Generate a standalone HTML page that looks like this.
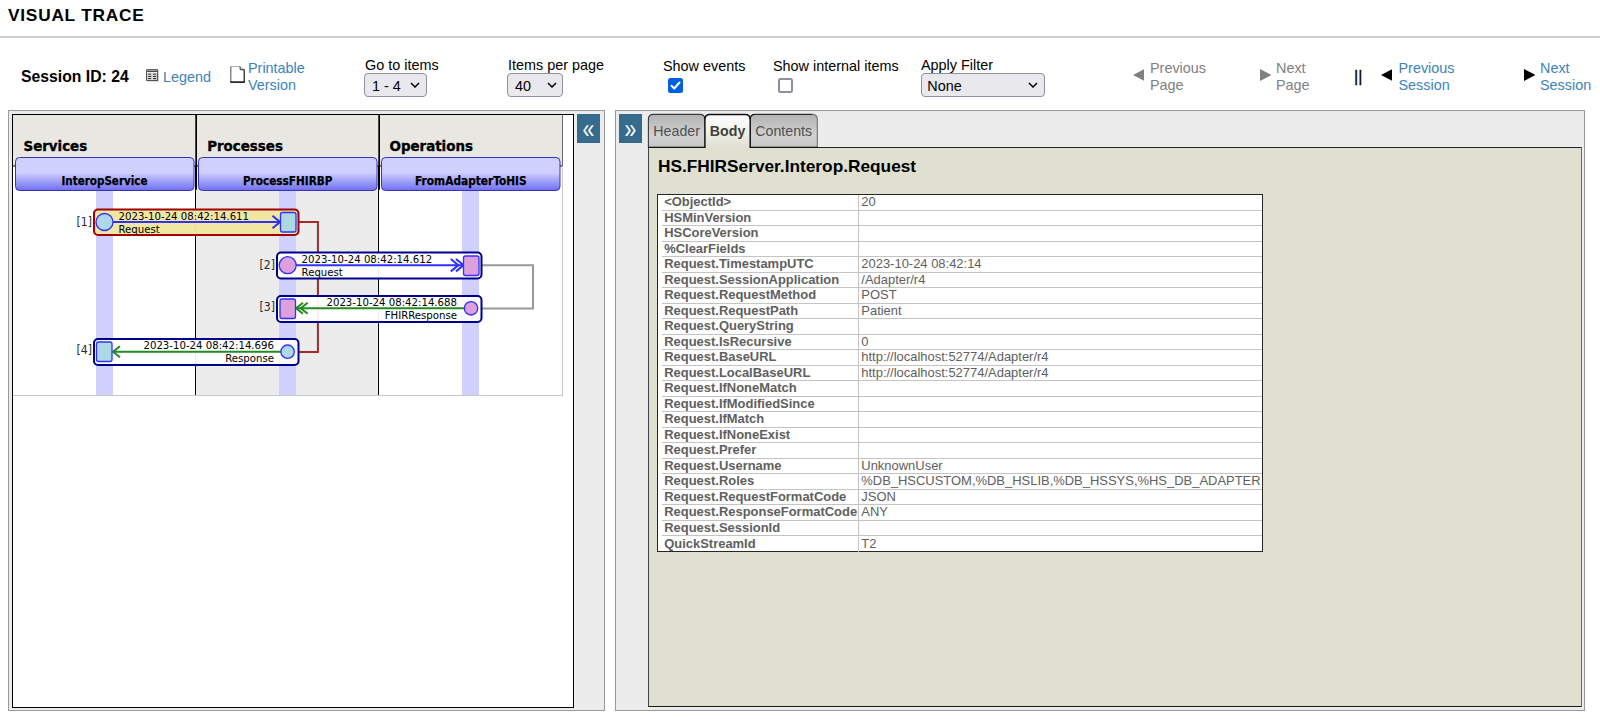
<!DOCTYPE html>
<html><head><meta charset="utf-8"><title>Visual Trace</title>
<style>
html,body{margin:0;padding:0;background:#fff;}
body{width:1600px;height:719px;position:relative;overflow:hidden;font-family:"Liberation Sans",Arial,sans-serif;font-size:14.4px;color:#000;}
.abs{position:absolute;white-space:nowrap;}
#title{left:8px;top:6px;font-size:17.28px;font-weight:bold;letter-spacing:0.77px;line-height:18px;}
#rule{left:0;top:36px;width:1600px;height:2px;background:#ccc;}
a,.lnk{color:#3b84bc;text-decoration:none;}
.lbl{font-size:14.4px;line-height:16px;}
.two{font-size:14.4px;line-height:16.5px;white-space:normal;}
.gray{color:#808080;}
.sel{box-sizing:border-box;height:24px;border:1px solid #8f8f9d;border-radius:4px;background:#e9e9ed;font-size:14.4px;line-height:22px;padding-left:7px;padding-top:1px;}
.sel svg{position:absolute;top:8.4px;}
.panel{box-sizing:border-box;border:1px solid #9a9a9a;background:#ececec;}
.btn{background:#356b8d;color:#fff;width:23px;height:28.6px;}

.r{height:15.5px;box-sizing:border-box;border-bottom:1px solid #c4c4c4;font-size:12.96px;line-height:14.5px;color:#606060;white-space:nowrap;overflow:hidden;}
.r:last-child{border-bottom:none;padding-top:1px;}
.r .k{display:inline-block;box-sizing:border-box;width:197px;height:15.5px;border-right:1px solid #c4c4c4;font-weight:bold;padding-left:2.2px;vertical-align:top;}
.r .v{display:inline-block;padding-left:2.3px;vertical-align:top;}
.chev{color:#fff;font-size:27.2px;line-height:28px;width:23px;text-align:center;transform:scaleX(0.78);transform-origin:50% 50%;}
.tabt{top:122px;height:18px;line-height:18px;font-size:14.2px;color:#505050;text-align:center;}
</style></head><body>
<div class="abs" id="title">VISUAL TRACE</div>
<div class="abs" id="rule"></div>

<!-- toolbar -->
<div class="abs" style="left:21px;top:68px;font-size:15.75px;font-weight:bold;line-height:18px;">Session ID: 24</div>
<svg class="abs" style="left:146px;top:69px" width="13" height="13" viewBox="0 0 13 13"><rect x="0.2" y="0.2" width="11.9" height="11.9" rx="0.8" fill="#2e2e2e"/><rect x="1.1" y="1.1" width="10.1" height="10.1" fill="#dedede"/><rect x="1.1" y="1.1" width="10.1" height="1" fill="#9c9c9c"/><rect x="1.1" y="2.1" width="10.1" height="0.9" fill="#3a3a3a"/><rect x="1.1" y="3" width="10.1" height="1" fill="#ededed"/><rect x="2.2" y="4.4" width="3" height="1.6" fill="#6c6c6c"/><rect x="7" y="4.4" width="3.2" height="1.6" fill="#6c6c6c"/><rect x="2.2" y="6.9" width="3" height="1.1" fill="#2c2c2c"/><rect x="7" y="6.9" width="3.2" height="1.1" fill="#2c2c2c"/><rect x="2.2" y="9" width="3" height="1.1" fill="#2c2c2c"/><rect x="7" y="9" width="3.2" height="1.1" fill="#2c2c2c"/><path d="M12.4 1.5V12.4H1.5" fill="none" stroke="#9fb4b4" stroke-width="0.5"/></svg>
<div class="abs lnk lbl" style="left:163px;top:69px;">Legend</div>
<svg class="abs" style="left:230px;top:66px" width="16" height="18" viewBox="0 0 16 18"><path d="M0.5 0.5H10L14.5 4V16.5H0.5Z" fill="#fff"/><path d="M1 0.5H10" stroke="#b0b0b0" stroke-width="1" fill="none"/><path d="M0.8 0.5V16" stroke="#6a6a6a" stroke-width="1.2" fill="none"/><path d="M10 0.5L10.3 3.7H14.3" stroke="#222" stroke-width="1" fill="none"/><path d="M10 0.5L14.3 3.7" stroke="#999" stroke-width="0.8" fill="none"/><path d="M14.2 3.5V16.5" stroke="#1a1a1a" stroke-width="1.2" fill="none"/><path d="M0.3 16.1H14.8" stroke="#111" stroke-width="1.6" fill="none"/></svg>
<div class="abs lnk two" style="left:248px;top:60px;width:70px;">Printable<br>Version</div>

<div class="abs lbl" style="left:365px;top:57px;">Go to items</div>
<div class="abs sel" style="left:364px;top:73px;width:63px;">1 - 4<svg style="left:45px" width="10" height="6" viewBox="0 0 10 6"><path d="M1 1l4 4 4-4" fill="none" stroke="#000" stroke-width="1.5"/></svg></div>
<div class="abs lbl" style="left:508px;top:57px;">Items per page</div>
<div class="abs sel" style="left:507px;top:73px;width:56px;">40<svg style="left:39px" width="10" height="6" viewBox="0 0 10 6"><path d="M1 1l4 4 4-4" fill="none" stroke="#000" stroke-width="1.5"/></svg></div>

<div class="abs lbl" style="left:663px;top:58px;">Show events</div>
<svg class="abs" style="left:667.6px;top:77.6px" width="15" height="15" viewBox="0 0 15 15"><rect x="0" y="0" width="15" height="15" rx="2.5" fill="#0060df"/><path d="M3.5 7.8l2.7 2.7 5.3-6" fill="none" stroke="#fff" stroke-width="2" stroke-linecap="round" stroke-linejoin="round"/></svg>
<div class="abs lbl" style="left:773px;top:58px;">Show internal items</div>
<div class="abs" style="left:777.6px;top:77.6px;width:15px;height:15px;box-sizing:border-box;border:2px solid #8f8f9d;border-radius:2.5px;background:#fff;"></div>
<div class="abs lbl" style="left:921px;top:57px;">Apply Filter</div>
<div class="abs sel" style="left:921px;top:73px;width:124px;padding-left:5.3px;">None<svg style="left:106px" width="10" height="6" viewBox="0 0 10 6"><path d="M1 1l4 4 4-4" fill="none" stroke="#000" stroke-width="1.5"/></svg></div>

<svg class="abs" style="left:1132.5px;top:68.5px" width="11.5" height="12" viewBox="0 0 11 12" preserveAspectRatio="none"><path d="M11 0v12L0 6z" fill="#808080"/></svg>
<div class="abs two gray" style="left:1150px;top:60px;width:70px;">Previous<br>Page</div>
<svg class="abs" style="left:1260px;top:68.5px" width="11.5" height="12" viewBox="0 0 11 12" preserveAspectRatio="none"><path d="M0 0v12L11 6z" fill="#808080"/></svg>
<div class="abs two gray" style="left:1276px;top:60px;width:50px;">Next<br>Page</div>
<div class="abs" style="left:1354px;top:68px;font-size:16px;line-height:18px;-webkit-text-stroke:0.3px #000;">||</div>
<svg class="abs" style="left:1380.8px;top:68.5px" width="11.5" height="12" viewBox="0 0 11 12" preserveAspectRatio="none"><path d="M11 0v12L0 6z" fill="#000"/></svg>
<div class="abs two lnk" style="left:1398.5px;top:60px;width:70px;">Previous<br>Session</div>
<svg class="abs" style="left:1523.5px;top:68.5px" width="11.5" height="12" viewBox="0 0 11 12" preserveAspectRatio="none"><path d="M0 0v12L11 6z" fill="#000"/></svg>
<div class="abs two lnk" style="left:1540px;top:60px;width:60px;">Next<br>Session</div>

<!-- left panel -->
<div class="abs panel" style="left:8px;top:110px;width:597px;height:601px;"></div>
<div class="abs" style="left:12px;top:114px;width:562px;height:594px;box-sizing:border-box;border:1px solid #000;background:#fff;"></div>
<div class="abs btn" style="left:577.4px;top:114.1px;width:22.6px;"></div>
<div class="abs chev" style="left:577.4px;top:114.5px;">&laquo;</div>
<svg class="abs" id="diagram" style="left:13px;top:115px" width="551" height="282" viewBox="0 0 551 282" font-family="'DejaVu Sans Condensed','DejaVu Sans',sans-serif">
<defs>
<linearGradient id="lg" x1="0" y1="0" x2="0" y2="1"><stop offset="0" stop-color="#d0d0ff"/><stop offset="0.45" stop-color="#d0d0ff"/><stop offset="1" stop-color="#6f6ff2"/></linearGradient>
</defs>
<!-- body lanes -->
<rect x="0" y="51" width="183" height="229" fill="#ffffff"/>
<rect x="183" y="51" width="183" height="229" fill="#ececec"/>
<rect x="366" y="51" width="183" height="229" fill="#ffffff"/>
<!-- header -->
<rect x="0" y="0" width="549" height="51" fill="#e8e7e2"/>
<rect x="0" y="50.5" width="549" height="1" fill="#000"/>
<!-- stripes -->
<rect x="83" y="75" width="17" height="205" fill="#d0d0ff"/>
<rect x="266" y="75" width="17" height="205" fill="#d0d0ff"/>
<rect x="449" y="75" width="17" height="205" fill="#d0d0ff"/>
<!-- separators -->
<rect x="182" y="51" width="1" height="229" fill="#000"/>
<rect x="365" y="51" width="1" height="229" fill="#000"/>
<rect x="182.3" y="0" width="1.7" height="74.8" fill="#000"/>
<rect x="365.3" y="0" width="1.7" height="74.8" fill="#000"/>
<rect x="549" y="0" width="1" height="281" fill="#c8c8c8"/>
<rect x="549" y="0" width="1" height="51" fill="#6a6a6a"/>
<rect x="0" y="280" width="550" height="1" fill="#c8c8c8"/>
<!-- lane titles -->
<g stroke="#3535b0" stroke-width="1" fill="url(#lg)">
<rect x="2.5" y="42.5" width="178.5" height="33" rx="4"/>
<rect x="185.5" y="42.5" width="178.5" height="33" rx="4"/>
<rect x="368.5" y="42.5" width="178.5" height="33" rx="4"/>
</g>
<g font-weight="bold" font-size="14.9" fill="#000" stroke="#000" stroke-width="0.35">
<text x="10.5" y="36">Services</text>
<text x="194.2" y="36">Processes</text>
<text x="376.5" y="36">Operations</text>
</g>
<g font-weight="bold" font-size="11.55" fill="#000" text-anchor="middle" stroke="#000" stroke-width="0.25">
<text x="91.5" y="69.7">InteropService</text>
<text x="274.7" y="69.7" font-size="11.68">ProcessFHIRBP</text>
<text x="457.9" y="69.7" font-size="11.8">FromAdapterToHIS</text>
</g>
<!-- connectors -->
<path d="M286 107H304.9V237H286" fill="none" stroke="#a52a2a" stroke-width="2"/>
<path d="M469 150.3H520V193.5H469" fill="none" stroke="#999" stroke-width="2"/>
<!-- message 1 -->
<rect x="81" y="94.5" width="204.5" height="25.5" rx="4" fill="#f0e6a0" fill-opacity="0.97" stroke="#a00000" stroke-width="2"/>
<path d="M100 107H267" stroke="#3030ff" stroke-width="2"/>
<path d="M259.5 100.8L267 107L259.5 113.2" fill="none" stroke="#3030ff" stroke-width="2.1"/>
<circle cx="91.5" cy="107" r="8.5" fill="#add8e6" stroke="#3030ff" stroke-width="1.3"/>
<rect x="267.5" y="97.5" width="15.5" height="19.5" rx="2" fill="#add8e6" stroke="#3030ff" stroke-width="1.3"/>
<g font-size="11.3" fill="#000">
<text x="105.5" y="104.8">2023-10-24 08:42:14.611</text>
<text x="105.5" y="117.5">Request</text>
<text x="79" y="111.2" text-anchor="end" font-size="12.1" fill="#2a2a2a">[1]</text>
</g>
<!-- message 2 -->
<rect x="264" y="137.5" width="204.5" height="26" rx="4" fill="#fff" fill-opacity="0.93" stroke="#00008b" stroke-width="2"/>
<path d="M283 150.2H450" stroke="#3030ff" stroke-width="2"/>
<path d="M437.8 144L445.3 150.2L437.8 156.4M443 144L450.5 150.2L443 156.4" fill="none" stroke="#3030ff" stroke-width="2.1"/>
<circle cx="274.7" cy="150.2" r="8.5" fill="#dda0dd" stroke="#3030ff" stroke-width="1.3"/>
<rect x="450.5" y="141" width="15.5" height="19.5" rx="2" fill="#dda0dd" stroke="#3030ff" stroke-width="1.3"/>
<g font-size="11.3" fill="#000">
<text x="288.6" y="148.3">2023-10-24 08:42:14.612</text>
<text x="288.6" y="161.2">Request</text>
<text x="262" y="154.1" text-anchor="end" font-size="12.1" fill="#2a2a2a">[2]</text>
</g>
<!-- message 3 -->
<rect x="264" y="181" width="204.5" height="26" rx="4" fill="#fff" fill-opacity="0.93" stroke="#00008b" stroke-width="2"/>
<path d="M283 193.3H452" stroke="#228b22" stroke-width="2"/>
<path d="M290 187.8L283 193.3L290 198.8M294.7 187.8L287.7 193.3L294.7 198.8" fill="none" stroke="#228b22" stroke-width="2"/>
<rect x="267" y="184" width="15.5" height="19.5" rx="2" fill="#dda0dd" stroke="#3030ff" stroke-width="1.3"/>
<circle cx="458" cy="193.3" r="6.7" fill="#dda0dd" stroke="#3030ff" stroke-width="1.3"/>
<g font-size="11.3" fill="#000" text-anchor="end">
<text x="444" y="191">2023-10-24 08:42:14.688</text>
<text x="444" y="204">FHIRResponse</text>
<text x="262" y="195.9" font-size="12.1" fill="#2a2a2a">[3]</text>
</g>
<!-- message 4 -->
<rect x="81" y="224" width="204.5" height="26" rx="4" fill="#fff" fill-opacity="0.93" stroke="#00008b" stroke-width="2"/>
<path d="M100 236.7H268" stroke="#228b22" stroke-width="2"/>
<path d="M107 231.2L100 236.7L107 242.2" fill="none" stroke="#228b22" stroke-width="2"/>
<rect x="83.5" y="227" width="15.5" height="19.5" rx="2" fill="#add8e6" stroke="#3030ff" stroke-width="1.3"/>
<circle cx="274.6" cy="236.7" r="6.7" fill="#add8e6" stroke="#3030ff" stroke-width="1.3"/>
<g font-size="11.3" fill="#000" text-anchor="end">
<text x="261" y="234.4">2023-10-24 08:42:14.696</text>
<text x="261" y="247.2">Response</text>
<text x="79" y="239.2" font-size="12.1" fill="#2a2a2a">[4]</text>
</g>
</svg>

<!-- right panel -->
<div class="abs panel" style="left:615px;top:110px;width:970px;height:601px;"></div>
<div class="abs btn" style="left:619.1px;top:114.1px;width:23.3px;"></div>
<div class="abs chev" style="left:619.3px;top:114.5px;">&raquo;</div>
<div class="abs" id="content" style="left:648px;top:147px;width:934px;height:560px;box-sizing:border-box;border:1px solid #333;border-color:#222 #6b6b63 #1a1a1a #444;background:#dfe0d0;"></div>
<svg class="abs" style="left:640px;top:108px" width="200" height="45" viewBox="640 108 200 45">
<defs><linearGradient id="tg" x1="0" y1="0" x2="0" y2="1"><stop offset="0" stop-color="#b3b3b3"/><stop offset="0.65" stop-color="#d2d2d2"/><stop offset="1" stop-color="#c6c6c6"/></linearGradient>
<linearGradient id="tb" x1="0" y1="0" x2="0" y2="1"><stop offset="0" stop-color="#fbfbff"/><stop offset="0.3" stop-color="#f7f7f4"/><stop offset="1" stop-color="#dfe0d0"/></linearGradient></defs>
<path d="M648.4 147.2V119.4Q648.4 114.4 653.4 114.4H699.9Q704.9 114.4 704.9 119.4V147.2Z" fill="url(#tg)"/>
<path d="M750.2 147.2V119.4Q750.2 114.4 755.2 114.4H812.3Q817.3 114.4 817.3 119.4V147.2Z" fill="url(#tg)"/>
<path d="M704.9 148.2V119.4Q704.9 114.4 709.9 114.4H745.2Q750.2 114.4 750.2 119.4V148.2Z" fill="url(#tb)"/>
<path d="M817.3 147V119.4Q817.3 114.4 812.3 114.4" fill="none" stroke="#7a7a7a" stroke-width="1.2"/>
<path d="M648.4 147.2V119.4Q648.4 114.4 653.4 114.4H699.9Q704.9 114.4 704.9 119.4" fill="none" stroke="#3a3a3a" stroke-width="1.1"/>
<path d="M755.2 114.4H812.3" fill="none" stroke="#2a2a2a" stroke-width="1.2"/>
<path d="M704.9 148V119.4Q704.9 114.4 709.9 114.4H745.2Q750.2 114.4 750.2 119.4V148" fill="none" stroke="#111" stroke-width="1.5"/>
<path d="M750.2 119.4Q750.2 114.4 755.2 114.4" fill="none" stroke="#111" stroke-width="1.3"/>
<path d="M648 147.3H705M750.2 147.3H818" fill="none" stroke="#111" stroke-width="1.3"/>
</svg>
<div class="abs tabt" style="left:648.4px;width:56.5px;">Header</div>
<div class="abs tabt" style="left:704.9px;width:45.3px;font-weight:bold;color:#404040;">Body</div>
<div class="abs tabt" style="left:750.2px;width:67.1px;">Contents</div>
<div class="abs" style="left:658px;top:156px;font-size:17.28px;font-weight:bold;line-height:20px;">HS.FHIRServer.Interop.Request</div>
<div class="abs" id="tbl" style="left:657px;top:194px;width:606px;height:358px;box-sizing:border-box;border:1px solid #262626;background:#fff;padding:0 0 0 4px;">
<div class="r"><span class="k">&lt;ObjectId&gt;</span><span class="v">20</span></div>
<div class="r"><span class="k">HSMinVersion</span><span class="v"></span></div>
<div class="r"><span class="k">HSCoreVersion</span><span class="v"></span></div>
<div class="r"><span class="k">%ClearFields</span><span class="v"></span></div>
<div class="r"><span class="k">Request.TimestampUTC</span><span class="v">2023-10-24 08:42:14</span></div>
<div class="r"><span class="k">Request.SessionApplication</span><span class="v">/Adapter/r4</span></div>
<div class="r"><span class="k">Request.RequestMethod</span><span class="v">POST</span></div>
<div class="r"><span class="k">Request.RequestPath</span><span class="v">Patient</span></div>
<div class="r"><span class="k">Request.QueryString</span><span class="v"></span></div>
<div class="r"><span class="k">Request.IsRecursive</span><span class="v">0</span></div>
<div class="r"><span class="k">Request.BaseURL</span><span class="v">http://localhost:52774/Adapter/r4</span></div>
<div class="r"><span class="k">Request.LocalBaseURL</span><span class="v">http://localhost:52774/Adapter/r4</span></div>
<div class="r"><span class="k">Request.IfNoneMatch</span><span class="v"></span></div>
<div class="r"><span class="k">Request.IfModifiedSince</span><span class="v"></span></div>
<div class="r"><span class="k">Request.IfMatch</span><span class="v"></span></div>
<div class="r"><span class="k">Request.IfNoneExist</span><span class="v"></span></div>
<div class="r"><span class="k">Request.Prefer</span><span class="v"></span></div>
<div class="r"><span class="k">Request.Username</span><span class="v">UnknownUser</span></div>
<div class="r"><span class="k">Request.Roles</span><span class="v">%DB_HSCUSTOM,%DB_HSLIB,%DB_HSSYS,%HS_DB_ADAPTER</span></div>
<div class="r"><span class="k">Request.RequestFormatCode</span><span class="v">JSON</span></div>
<div class="r"><span class="k">Request.ResponseFormatCode</span><span class="v">ANY</span></div>
<div class="r"><span class="k">Request.SessionId</span><span class="v"></span></div>
<div class="r"><span class="k">QuickStreamId</span><span class="v">T2</span></div>
</div>
</body></html>
